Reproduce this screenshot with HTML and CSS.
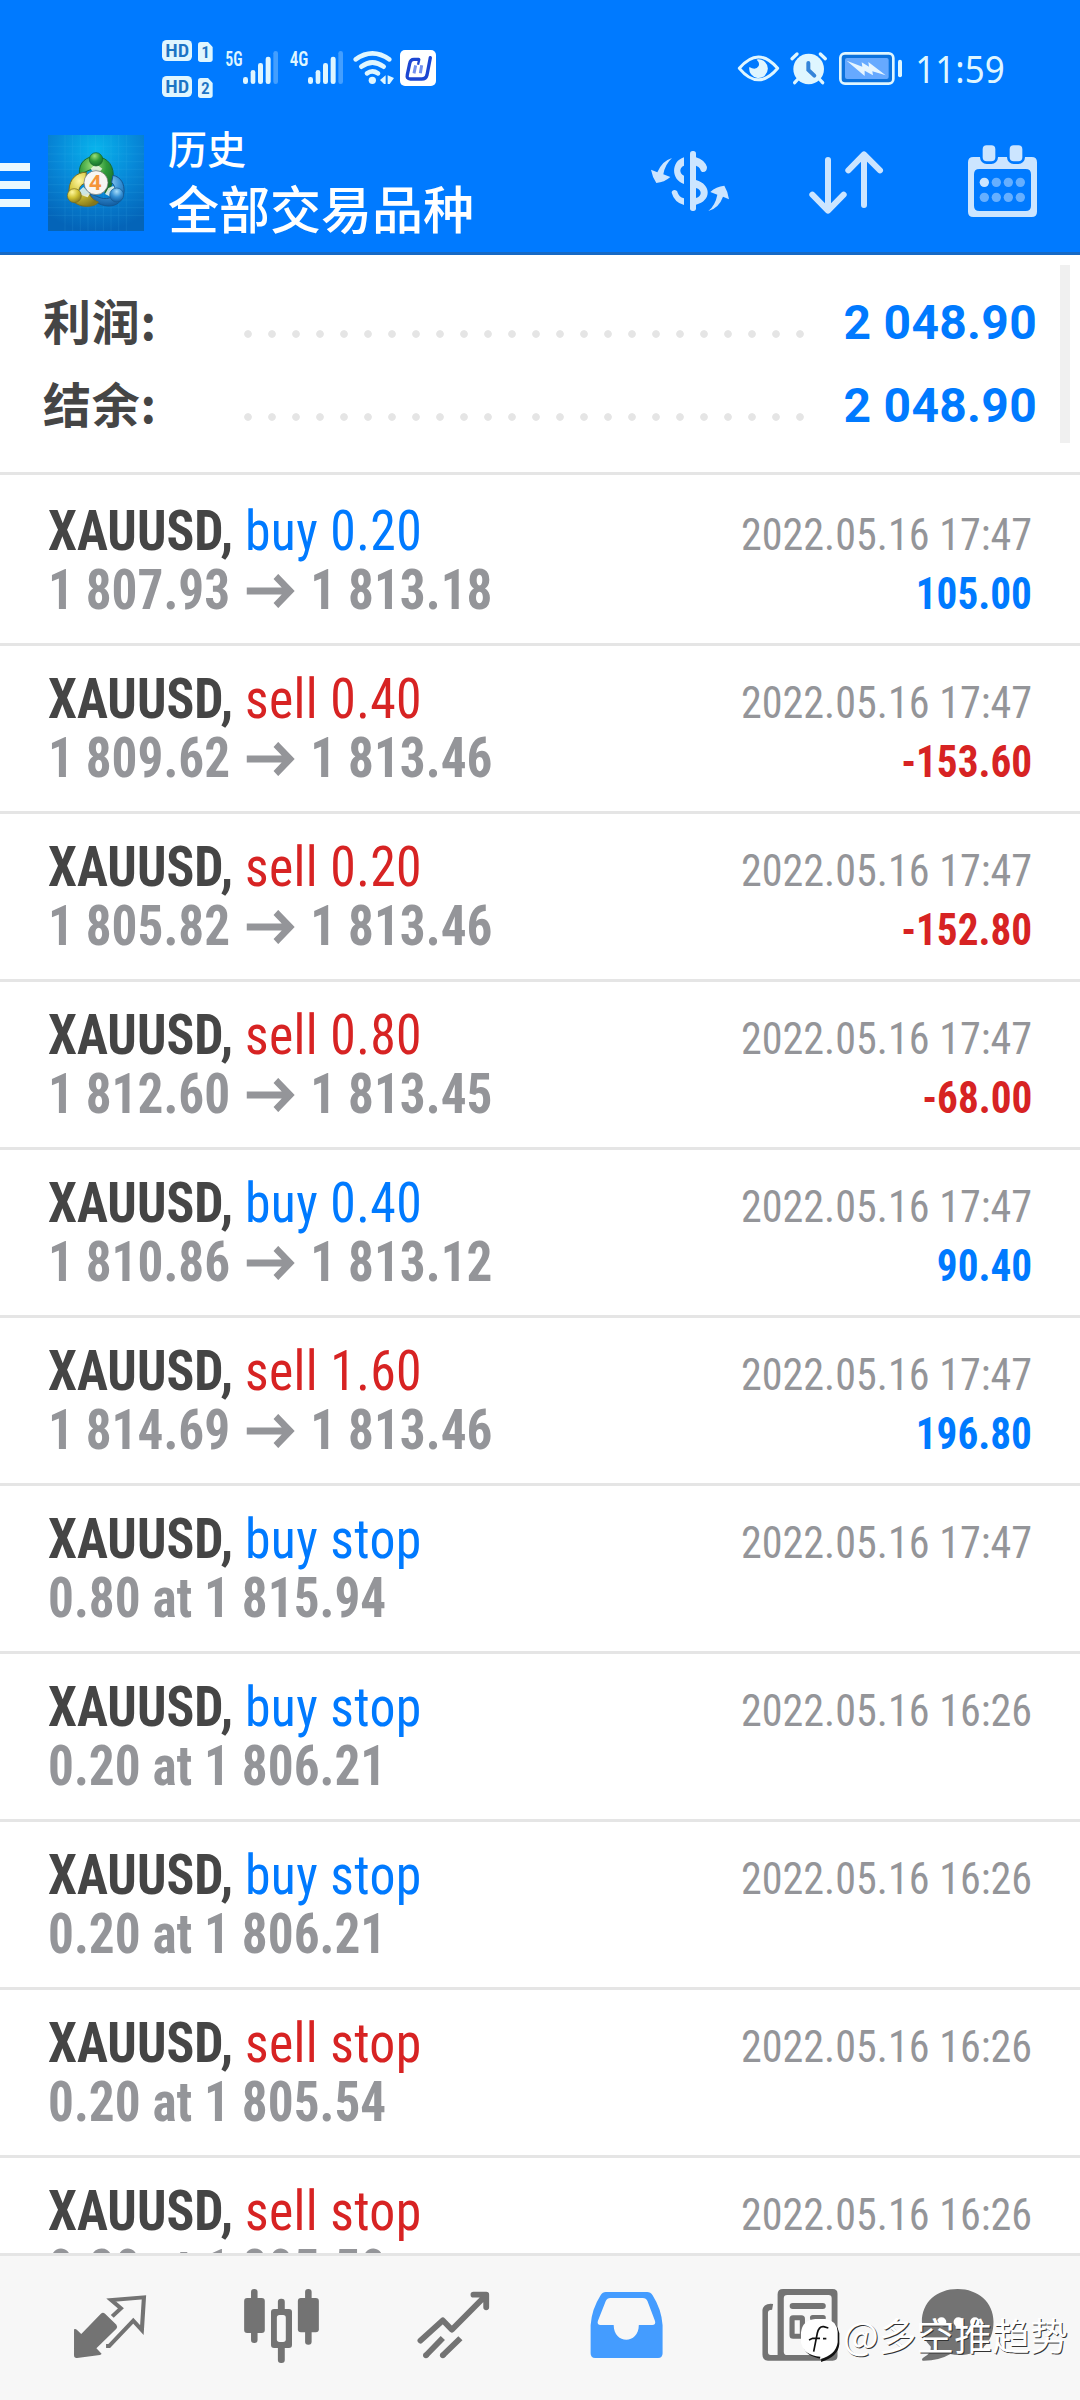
FILE: index.html
```
<!DOCTYPE html>
<html lang="zh-CN">
<head>
<meta charset="utf-8">
<title>历史</title>
<link rel="stylesheet" href="styles.css">
</head>
<body>
<svg class="defs" aria-hidden="true">
  <symbol id="arrow" viewBox="0 0 52 34" preserveAspectRatio="none">
    <path d="M0 17H47M31.500 2.500 46.500 17 31.500 31.500" fill="none" stroke="#949599" stroke-width="7.200"/>
  </symbol>
</svg>
<div class="screen">
  <header class="header">
    <div class="status">
      <svg width="320" height="100" viewBox="0 0 960 300" fill="#dff6ff">
        <rect x="66" y="60" width="90" height="63" rx="14"/>
        <text class="hd" x="76" y="111" textLength="72" lengthAdjust="spacingAndGlyphs">HD</text>
        <path d="M182 66H204L218 81V118Q218 126 210 126H182Q174 126 174 118V74Q174 66 182 66Z"/>
        <text class="sim" x="184" y="115">1</text>
        <rect x="66" y="168" width="90" height="63" rx="14"/>
        <text class="hd" x="76" y="219" textLength="72" lengthAdjust="spacingAndGlyphs">HD</text>
        <path d="M182 174H204L218 189V226Q218 234 210 234H182Q174 234 174 226V182Q174 174 182 174Z"/>
        <text class="sim" x="183" y="223">2</text>
        <text class="net" x="256" y="137" textLength="52" lengthAdjust="spacingAndGlyphs">5G</text>
        <text class="net" x="449" y="137" textLength="56" lengthAdjust="spacingAndGlyphs">4G</text>
        <g id="bars">
          <rect x="309" y="171" width="15" height="21" rx="7"/>
          <rect x="332" y="150" width="14" height="42" rx="7"/>
          <rect x="354" y="129" width="15" height="63" rx="7"/>
          <rect x="377" y="110" width="15" height="82" rx="7"/>
          <rect x="400" y="93" width="14" height="99" rx="7" opacity=".3"/>
        </g>
        <use href="#bars" x="195"/>
        <g fill="none" stroke="#dff6ff" stroke-width="14" stroke-linecap="round">
          <path d="M647 118Q697 82 748 118"/>
          <path d="M664 140Q697 115 731 140"/>
          <path d="M681 160Q697 148 714 160"/>
        </g>
        <circle cx="697" cy="181" r="11"/>
        <path d="M737 166V192H732L720 180ZM743 166V192H749L762 174Z"/>
        <rect x="780" y="90" width="108" height="108" rx="15" fill="#fff"/>
        <path d="M836 118H822Q811 118 809 131L802 164Q799 177 811 177H845Q858 177 861 165L871 113" fill="none" stroke="#1c46d2" stroke-width="10" stroke-linecap="round"/>
        <path d="M827 136 822 160M845 136 841 160" stroke="#7390ee" stroke-width="9"/>
        <path d="M838 118 834 134" stroke="#1c46d2" stroke-width="7"/>
      </svg>
      <svg class="status-right" width="320" height="80" viewBox="0 0 960 240" fill="#dff6ff">
        <path d="M58 115Q115 47 173 115Q115 184 58 115Z" fill="none" stroke="#dff6ff" stroke-width="9" stroke-linejoin="round"/>
        <path d="M114 88A28 28 0 1 1 88 111Q107 123 116 108Q120 98 110 89Z"/>
        <circle cx="266" cy="117" r="46"/>
        <path d="M216 86 231 72M316 86 301 72" stroke="#dff6ff" stroke-width="10" stroke-linecap="round"/>
        <path d="M234 147 224 158M298 147 308 158" stroke="#dff6ff" stroke-width="10" stroke-linecap="round"/>
        <path d="M265 99V120L283 137" fill="none" stroke="#3584d8" stroke-width="12" stroke-linecap="round"/>
        <rect x="361" y="70" width="159" height="91" rx="14" fill="#0b72dd" stroke="#dff6ff" stroke-width="8"/>
        <rect x="375" y="84" width="131" height="63" rx="6" fill="#66a9ff"/>
        <path d="M380 92 427 110 425 97 447 110 445 96 497 136 457 124 459 136 434 122 434 138Z" fill="#e6f5ff"/>
        <rect x="534" y="89" width="12" height="53" rx="6"/>
        <text class="clock" x="586" y="160" textLength="268" lengthAdjust="spacingAndGlyphs">11:59</text>
      </svg>
    </div>
    <div class="bar">
      <svg class="menu" width="30" height="44" viewBox="0 0 30 44" fill="#eaf8ff"><path d="M0 0H30V8H0ZM0 18H30V26H0ZM0 36H30V44H0Z"/></svg>
      <svg class="logo" width="96" height="96" viewBox="12 15 288 288">
        <defs>
          <radialGradient id="sky" cx=".5" cy=".15" r=".85"><stop offset="0" stop-color="#08b4ec"/><stop offset=".5" stop-color="#0788d8"/><stop offset="1" stop-color="#0464b8"/></radialGradient>
          <radialGradient id="green" cx=".4" cy=".25" r=".8"><stop offset="0" stop-color="#9be07a"/><stop offset=".5" stop-color="#2f9a3a"/><stop offset="1" stop-color="#136a2b"/></radialGradient>
          <radialGradient id="gold" cx=".35" cy=".25" r=".8"><stop offset="0" stop-color="#fff7a0"/><stop offset=".5" stop-color="#d2c335"/><stop offset="1" stop-color="#85781a"/></radialGradient>
          <radialGradient id="blue" cx=".5" cy=".25" r=".8"><stop offset="0" stop-color="#a5dcfa"/><stop offset=".5" stop-color="#348fd4"/><stop offset="1" stop-color="#0d5599"/></radialGradient>
        </defs>
        <rect x="12" y="15" width="288" height="288" fill="url(#sky)"/>
        <path d="M63 15V303M86 15V303M109 15V303M132 15V303M155 15V303M178 15V303M201 15V303M224 15V303M247 15V303M12 49H300M12 72H300M12 95H300M12 118H300M12 141H300M12 164H300M12 187H300M12 210H300M12 233H300M12 256H300" stroke="#4cc3f2" stroke-width="1.500" opacity=".25"/>
        <path d="M106 131C104 96 128 78 157 80C193 82 212 110 207 146C204 169 194 184 183 190L183 155C180 130 164 116 145 118C130 120 122 130 106 131Z" fill="url(#green)" stroke="#176b34" stroke-width="3"/>
        <path d="M207 136C231 141 242 162 240 187C236 214 218 229 192 228C164 226 145 212 137 191C157 196 172 211 196 204C216 196 218 172 203 157Z" fill="url(#blue)" stroke="#145894" stroke-width="3"/>
        <path d="M127 127C99 126 76 147 75 180C74 207 95 229 128 229C144 229 158 225 163 216C146 211 139 197 133 190C116 203 99 190 107 173C110 166 117 161 125 160Z" fill="url(#gold)" stroke="#796e20" stroke-width="3"/>
        <path d="M140 116 156 101 175 116 166 126H147ZM104 184 118 171 138 191 131 202 111 195ZM193 174 208 168 218 184 201 201 183 192Z" fill="#eef7e8" opacity=".85"/>
        <circle cx="156" cy="88" r="20" fill="url(#green)" stroke="#126429" stroke-width="2"/>
        <circle cx="91" cy="197" r="21" fill="url(#gold)" stroke="#776a1d" stroke-width="2"/>
        <circle cx="218" cy="195" r="21" fill="url(#blue)" stroke="#135993" stroke-width="2"/>
        <circle cx="156" cy="158" r="36" fill="#f7f6f4" stroke="#686d66" stroke-width="2"/>
        <text class="four" x="136" y="181">4</text>
      </svg>
      <div class="titles">
        <div class="subtitle">历史</div>
        <div class="title">全部交易品种</div>
      </div>
      <div class="actions">
        <svg width="100" height="132" viewBox="60 0 300 396" fill="#cce5ff">
          <path d="M156 114Q135 133 130 163L151 171Q133 187 109 189Q97 171 93 149L112 157Q127 122 156 114Z"/>
          <path d="M265 273Q286 256 292 224L271 216Q288 199 313 197Q324 215 327 238L309 230Q297 264 265 273Z"/>
          <rect x="210" y="93" width="18" height="180" rx="8"/>
          <path d="M192 112V137C178 142 177 160 192 167V192C153 180 152 124 192 112ZM228 112Q253 119 261 141Q261 156 249 156Q243 156 240 146Q237 140 228 137ZM155 218C155 207 172 207 173 218C176 226 181 232 192 235V255Q163 247 155 218ZM228 180C275 193 275 243 228 254V234C247 229 247 209 228 204Z"/>
        </svg>
        <svg width="100" height="132" viewBox="540 0 300 396" fill="none" stroke="#cce5ff" stroke-width="18" stroke-linecap="round" stroke-linejoin="round">
          <path d="M624 120V268M577 224 624 272 671 224M732 255V108M685 151 732 103 780 151"/>
        </svg>
        <svg width="110" height="132" viewBox="990 0 330 396" fill="#cce5ff">
          <path fill-rule="evenodd" d="M1060 111H1235Q1251 111 1251 127V275Q1251 291 1235 291H1060Q1044 291 1044 275V127Q1044 111 1060 111ZM1078 147Q1062 147 1062 163V257Q1062 273 1078 273H1217Q1233 273 1233 257V163Q1233 147 1217 147Z"/>
          <rect x="1084" y="72" width="46" height="56" rx="16" stroke="#007aff" stroke-width="8"/>
          <rect x="1165" y="72" width="46" height="56" rx="16" stroke="#007aff" stroke-width="8"/>
          <circle cx="1093" cy="187" r="14"/>
          <g fill="#66afff"><circle cx="1129" cy="187" r="14"/><circle cx="1165" cy="187" r="14"/><circle cx="1201" cy="187" r="14"/><circle cx="1093" cy="232" r="14"/><circle cx="1129" cy="232" r="14"/><circle cx="1165" cy="232" r="14"/><circle cx="1201" cy="232" r="14"/></g>
        </svg>
      </div>
    </div>
  </header>

  <section class="summary">
    <div class="totals">
      <div class="total"><span class="label">利润:</span><span class="dots"></span><span class="value">2 048.90</span></div>
      <div class="total"><span class="label">结余:</span><span class="dots"></span><span class="value">2 048.90</span></div>
    </div>
    <div class="scrollbar"></div>
  </section>

  <main class="list">
    <div class="deal">
      <div class="line"><span class="left"><b>XAUUSD,</b> <span class="buy">buy 0.20</span></span><span class="date">2022.05.16 17:47</span></div>
      <div class="line"><span class="left price">1 807.93<svg class="arrow"><use href="#arrow"/></svg>1 813.18</span><span class="profit buy">105.00</span></div>
    </div>
    <div class="deal">
      <div class="line"><span class="left"><b>XAUUSD,</b> <span class="sell">sell 0.40</span></span><span class="date">2022.05.16 17:47</span></div>
      <div class="line"><span class="left price">1 809.62<svg class="arrow"><use href="#arrow"/></svg>1 813.46</span><span class="profit sell">-153.60</span></div>
    </div>
    <div class="deal">
      <div class="line"><span class="left"><b>XAUUSD,</b> <span class="sell">sell 0.20</span></span><span class="date">2022.05.16 17:47</span></div>
      <div class="line"><span class="left price">1 805.82<svg class="arrow"><use href="#arrow"/></svg>1 813.46</span><span class="profit sell">-152.80</span></div>
    </div>
    <div class="deal">
      <div class="line"><span class="left"><b>XAUUSD,</b> <span class="sell">sell 0.80</span></span><span class="date">2022.05.16 17:47</span></div>
      <div class="line"><span class="left price">1 812.60<svg class="arrow"><use href="#arrow"/></svg>1 813.45</span><span class="profit sell">-68.00</span></div>
    </div>
    <div class="deal">
      <div class="line"><span class="left"><b>XAUUSD,</b> <span class="buy">buy 0.40</span></span><span class="date">2022.05.16 17:47</span></div>
      <div class="line"><span class="left price">1 810.86<svg class="arrow"><use href="#arrow"/></svg>1 813.12</span><span class="profit buy">90.40</span></div>
    </div>
    <div class="deal">
      <div class="line"><span class="left"><b>XAUUSD,</b> <span class="sell">sell 1.60</span></span><span class="date">2022.05.16 17:47</span></div>
      <div class="line"><span class="left price">1 814.69<svg class="arrow"><use href="#arrow"/></svg>1 813.46</span><span class="profit buy">196.80</span></div>
    </div>
    <div class="deal">
      <div class="line"><span class="left"><b>XAUUSD,</b> <span class="buy">buy stop</span></span><span class="date">2022.05.16 17:47</span></div>
      <div class="line"><span class="left price">0.80 at 1 815.94</span></div>
    </div>
    <div class="deal">
      <div class="line"><span class="left"><b>XAUUSD,</b> <span class="buy">buy stop</span></span><span class="date">2022.05.16 16:26</span></div>
      <div class="line"><span class="left price">0.20 at 1 806.21</span></div>
    </div>
    <div class="deal">
      <div class="line"><span class="left"><b>XAUUSD,</b> <span class="buy">buy stop</span></span><span class="date">2022.05.16 16:26</span></div>
      <div class="line"><span class="left price">0.20 at 1 806.21</span></div>
    </div>
    <div class="deal">
      <div class="line"><span class="left"><b>XAUUSD,</b> <span class="sell">sell stop</span></span><span class="date">2022.05.16 16:26</span></div>
      <div class="line"><span class="left price">0.20 at 1 805.54</span></div>
    </div>
    <div class="deal">
      <div class="line"><span class="left"><b>XAUUSD,</b> <span class="sell">sell stop</span></span><span class="date">2022.05.16 16:26</span></div>
      <div class="line"><span class="left price">0.20 at 1 805.50</span></div>
    </div>
  </main>

  <nav class="tabs">
    <svg viewBox="69.700 348 499.500 432" preserveAspectRatio="none">
      <path d="M293 521Q299 516 305 521L338 554Q342 560 338 566L280 625L295 641Q294 644 290 645L224 654Q215 655 215 646V568Q219 565 223 569L236 582Z"/>
      <path d="M326 529 351 505 323 480 418 472 412 570 387 542 317 618H308" fill="none" stroke="#737373" stroke-width="12"/>
    </svg>
    <svg viewBox="569.200 348 499.500 432" preserveAspectRatio="none">
      <rect x="709" y="474" width="60" height="105" rx="9"/><rect x="729" y="447" width="19" height="162" rx="9"/>
      <rect x="865" y="474" width="61" height="103" rx="9"/><rect x="886" y="447" width="19" height="167" rx="9"/>
      <rect x="807" y="476" width="20" height="193" rx="9"/><rect x="787" y="507" width="61" height="117" rx="9"/>
      <rect x="804" y="525" width="26" height="81" rx="8" fill="#f7f7f7"/>
    </svg>
    <svg viewBox="1068.700 348 499.500 432" preserveAspectRatio="none">
      <path d="M1221 602 1286 541 1312 569 1410 467M1375 464H1412V502" fill="none" stroke="#737373" stroke-width="17" stroke-linecap="round" stroke-linejoin="round"/>
      <path d="M1237 646 1286 594M1286 646 1337 595" stroke="#737373" stroke-width="17"/>
      <circle cx="1237" cy="646" r="8.500"/><circle cx="1286" cy="646" r="8.500"/>
    </svg>
    <svg viewBox="0 348 499.500 432" preserveAspectRatio="none">
      <path fill="#449cff" fill-rule="evenodd" d="M191 456H311Q321 456 327 466Q353 508 356 556V640Q356 654 343 654H160Q147 654 147 640V556Q150 508 176 466Q182 456 191 456ZM204 474Q195 474 191 483L168 543Q165 555 176 555H214C214 614 287 614 287 555H326Q337 555 334 543L312 483Q308 474 299 474Z"/>
    </svg>
    <svg viewBox="499.500 348 499.500 432" preserveAspectRatio="none">
      <path fill-rule="evenodd" d="M706 447H850Q864 447 864 461V648Q864 662 850 662H662Q646 661 646 644V510Q648 492 670 491L677 492L674 509Q662 509 662 518V636Q662 645 670 645H690V463Q690 447 706 447ZM718 465Q708 465 708 475V635Q708 645 718 645H838Q847 645 847 635V475Q847 465 838 465Z"/>
      <rect x="725" y="489" width="105" height="18" rx="9"/><rect x="784" y="525" width="46" height="17" rx="8"/>
      <rect x="784" y="560" width="46" height="17" rx="8"/><rect x="732" y="533" width="30" height="56" rx="3" fill="none" stroke="#737373" stroke-width="15"/>
    </svg>
    <svg viewBox="999 348 499.500 432" preserveAspectRatio="none">
      <path d="M1213 447C1272 447 1317 487 1317 545C1317 609 1278 645 1216 645Q1204 645 1192 642Q1157 663 1111 662Q1106 657 1116 651Q1136 639 1135 620Q1109 596 1109 545C1109 487 1152 447 1213 447Z"/>
      <g fill="#fff"><circle cx="1166" cy="546" r="14"/><circle cx="1215" cy="546" r="14"/><circle cx="1263" cy="546" r="14"/></g>
    </svg>
  </nav>

  <div class="watermark">
    <svg width="42" height="46" viewBox="180 117 126 138">
      <path d="M226 123H257Q290 127 295 160V192Q292 230 240 246L241 236Q190 230 184 190V160Q187 128 226 123Z" fill="#111" transform="translate(3 3)"/>
      <path d="M226 120H255Q290 124 293 158V190Q288 228 240 241L241 233Q190 230 183 190V160Q187 124 226 120Z" fill="#fff"/>
      <path d="M221 218 232 162Q237 141 251 143L265 147M207 183 218 178H240M249 179H259" fill="none" stroke="#111" stroke-width="5"/>
    </svg>
    <span>@多空推趋势</span>
  </div>
</div>
</body>
</html>
```
FILE: styles.css
```
* { box-sizing: border-box; }
body { margin: 0; background: #fff; font-family: Roboto, "Noto Sans CJK SC", sans-serif; }
svg { display: block; flex: none; }
.defs { position: absolute; width: 0; height: 0; }
.screen { position: relative; display: flex; flex-direction: column; width: 1080px; height: 2400px; overflow: hidden; }

.header { flex: none; height: 255px; background: #007aff; border-bottom: 3px solid #1769c4; }
.status { display: flex; justify-content: space-between; height: 120px; padding: 20px 40px 0 140px; }
.status-right { margin-top: 10px; }
.hd, .sim, .net { font-family: "Roboto Condensed", Roboto, sans-serif; font-stretch: 75%; font-weight: 600; }
.hd { font-size: 56px; fill: #1c74c4; }
.sim { font-size: 52px; fill: #1c74c4; }
.net { font-size: 60px; }
.clock { font-family: "Noto Sans", sans-serif; font-size: 112px; }

.bar { display: flex; height: 132px; }
.menu { margin-top: 43px; }
.logo { margin: 15px 24px 0 18px; }
.four { font-family: "Open Sans", sans-serif; font-weight: 700; font-size: 64px; fill: #f5953a; }
.titles { flex: 1; padding-top: 4px; color: #fff; font-family: "Noto Sans CJK SC", sans-serif; font-weight: 500; white-space: nowrap; }
.subtitle { font-size: 39px; line-height: 46px; }
.title { margin-top: 5px; font-size: 51px; line-height: 64px; }
.actions { display: flex; width: 440px; }
.actions svg:nth-child(2) { margin-left: 60px; }
.actions svg:nth-child(3) { margin-left: 50px; }

.summary { flex: none; display: flex; height: 220px; border-bottom: 3px solid #e5e5e5; }
.totals { flex: 1; padding: 26px 23px 0 43px; }
.total { display: flex; align-items: baseline; height: 83px; }
.label { position: relative; top: 1px; width: 193px; font: 700 48px/60px "Noto Sans CJK SC", sans-serif; letter-spacing: .8px; color: #454545; }
.dots { align-self: flex-start; width: 576px; height: 24px; margin-top: 41px; background: radial-gradient(circle, #e5e5e5 3.4px, transparent 4.2px) 0 0 / 24px 24px; }
.value { flex: 1; text-align: right; font-weight: 700; font-size: 48px; line-height: 83px; letter-spacing: .3px; color: #007aff; white-space: nowrap; }
.scrollbar { width: 10px; height: 178px; margin: 10px 10px 0 0; background: #f0f0f0; }

.list { flex: 1; min-height: 0; overflow: hidden; font-family: "Roboto Condensed", Roboto, sans-serif; font-stretch: 75%; }
.deal { height: 168px; padding: 24px 48px 0; border-top: 3px solid #e5e5e5; }
.deal:first-child { padding-top: 27px; border-top: 0; }
.line { display: flex; justify-content: space-between; align-items: baseline; height: 59px; line-height: 59px; white-space: nowrap; }
.left { font-size: 55px; white-space: pre; color: #454545; transform: scaleX(.94); transform-origin: 0 0; }
.left .buy, .left .sell { font-weight: 450; letter-spacing: .4px; }
.price { display: flex; align-items: baseline; font-weight: 700; color: #949599; transform: scaleX(.932); }
.arrow { width: 52px; height: 34px; margin: 0 16px 0 18px; align-self: center; }
.date, .profit { font-size: 45px; transform: scaleX(.936); transform-origin: 100% 0; }
.date { color: #949599; }
.profit { font-weight: 700; transform: scaleX(.915); }
.buy { color: #007aff; }
.sell { color: #d72323; }

.tabs { flex: none; display: grid; grid-template-columns: repeat(6, 172px); height: 147px; padding: 0 24px; border-top: 3px solid #e5e5e5; background: #f7f7f7; fill: #737373; }
.tabs svg { width: 172px; height: 144px; }

.watermark { position: absolute; left: 800px; top: 2309px; display: flex; gap: 1px; color: #fff; font: 37.8px/50px "Noto Sans CJK SC", sans-serif; text-shadow: 1px 1px 0 #333; white-space: nowrap; }
.watermark svg { margin-top: 9px; }
```
